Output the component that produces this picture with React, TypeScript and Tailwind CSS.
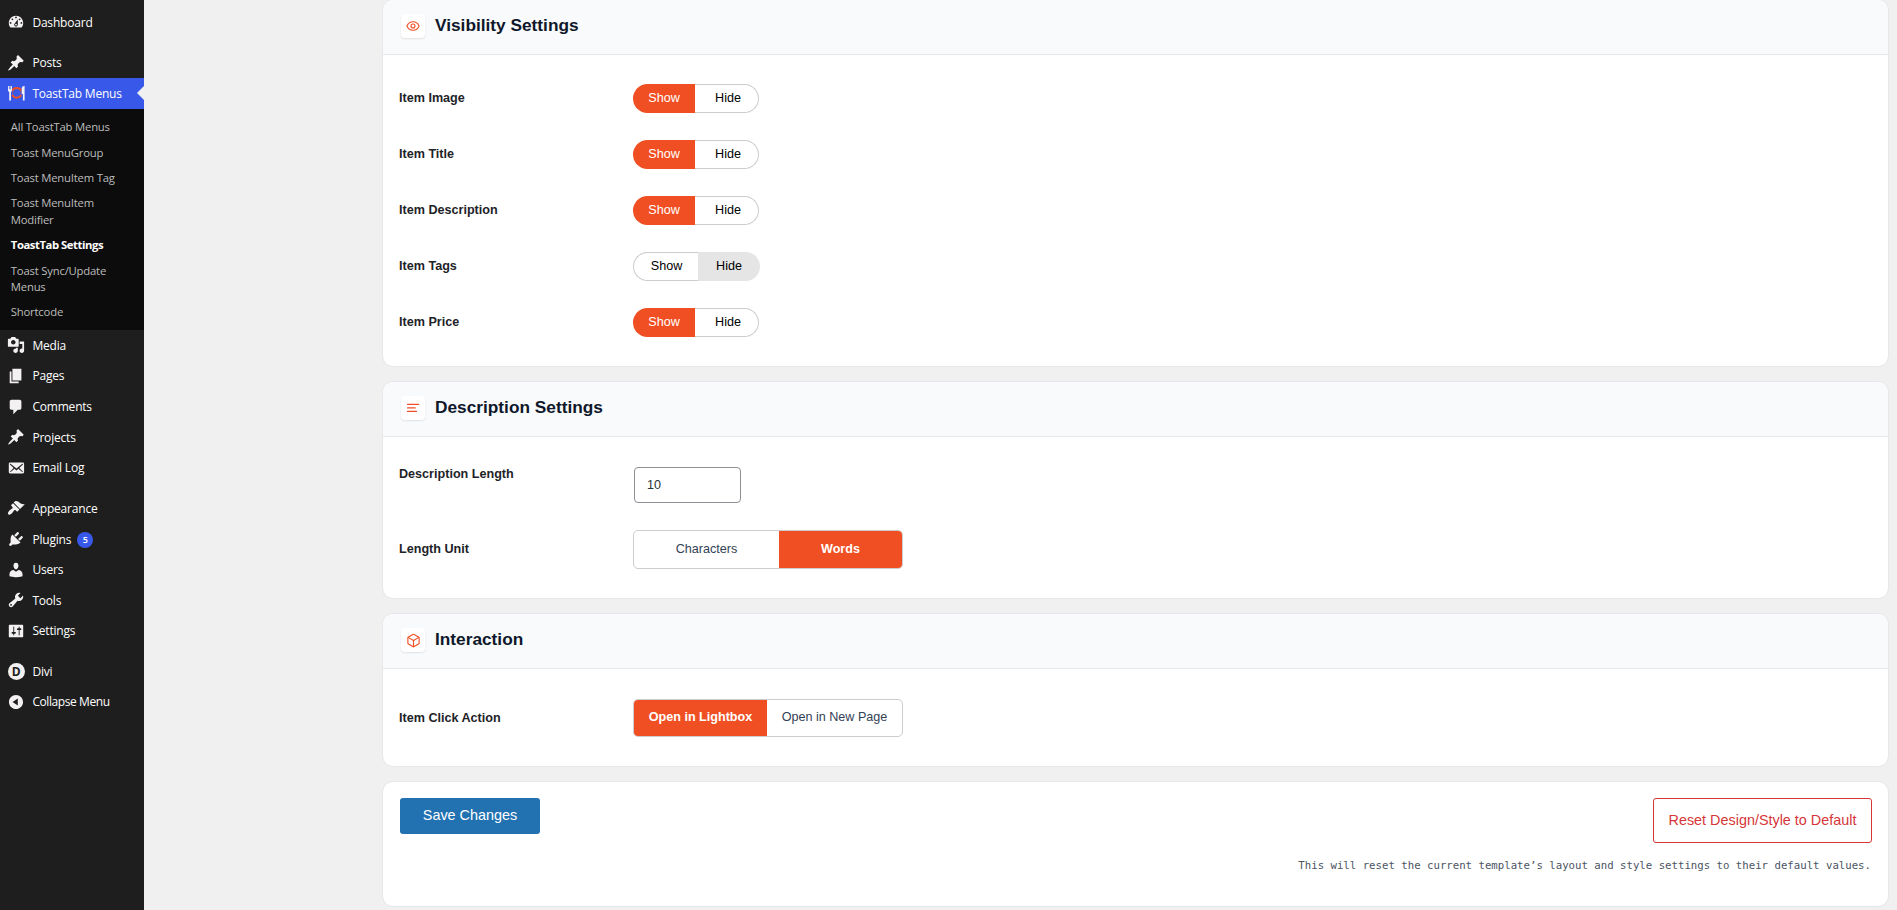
import type { ReactNode } from 'react';
import { Box } from 'lucide-react';

const icons = {
    dashboard: 'M3.76 16h12.48c1.1-1.37 1.76-3.11 1.76-5 0-4.42-3.58-8-8-8s-8 3.58-8 8c0 1.89.66 3.63 1.76 5zM10 4c.55 0 1 .45 1 1s-.45 1-1 1-1-.45-1-1 .45-1 1-1zM6 6c.55 0 1 .45 1 1s-.45 1-1 1-1-.45-1-1 .45-1 1-1zm8 0c.55 0 1 .45 1 1s-.45 1-1 1-1-.45-1-1 .45-1 1-1zm-5.37 5.55L12 7v6c0 1.1-.9 2-2 2s-2-.9-2-2c0-.57.24-1.08.63-1.45zM4 10c.55 0 1 .45 1 1s-.45 1-1 1-1-.45-1-1 .45-1 1-1zm12 0c.55 0 1 .45 1 1s-.45 1-1 1-1-.45-1-1 .45-1 1-1zm-5 3c0-.55-.45-1-1-1s-1 .45-1 1 .45 1 1 1 1-.45 1-1z',
    pin: 'M10.44 3.02l1.82-1.82 6.36 6.35-1.83 1.82c-1.05-.68-2.48-.57-3.41.36l-.75.75c-.92.93-1.04 2.35-.35 3.41l-1.83 1.82-2.41-2.41-2.8 2.79c-.42.42-3.38 2.71-3.8 2.29s1.86-3.39 2.28-3.81l2.79-2.79L4.1 9.36l1.83-1.82c1.05.69 2.48.57 3.4-.36l.75-.75c.93-.92 1.05-2.35.36-3.41z',
    media: 'M13 11V4c0-.55-.45-1-1-1h-1.67L9 1H5L3.67 3H2c-.55 0-1 .45-1 1v7c0 .55.45 1 1 1h10c.55 0 1-.45 1-1zM7 4.5c1.38 0 2.5 1.12 2.5 2.5S8.38 9.5 7 9.5 4.5 8.38 4.5 7 5.62 4.5 7 4.5zM14 6h5v10.5c0 1.38-1.12 2.5-2.5 2.5S14 17.88 14 16.5s1.12-2.5 2.5-2.5c.17 0 .34.02.5.05V9h-3V6zm-4 8.05V13h2v3.5c0 1.38-1.12 2.5-2.5 2.5S7 17.88 7 16.5 8.12 14 9.5 14c.17 0 .34.02.5.05z',
    page: 'M6 15V2h10v13H6zm-1 1h8v2H3V5h2v11z',
    comment: 'M5 2h9c1.1 0 2 .9 2 2v7c0 1.1-.9 2-2 2h-2l-5 5v-5H5c-1.1 0-2-.9-2-2V4c0-1.1.9-2 2-2z',
    email: 'M19 14.5v-9c0-.83-.67-1.5-1.5-1.5H3.49c-.83 0-1.5.67-1.5 1.5v9c0 .83.67 1.5 1.5 1.5H17.5c.83 0 1.5-.67 1.5-1.5zm-1.31-9.11c.33.33.15.67-.03.84L13.6 9.95l3.9 4.06c.12.14.2.36.06.51-.13.16-.43.15-.56.05l-4.37-3.73-2.14 1.95-2.13-1.95-4.37 3.73c-.13.1-.43.11-.56-.05-.14-.15-.06-.37.06-.51l3.9-4.06-4.06-3.72c-.18-.17-.36-.51-.03-.84s.67-.17.95.07l6.24 5.04 6.25-5.04c.28-.24.62-.4.95-.07z',
    appearance: 'M14.48 11.06L7.41 3.99l1.5-1.5c.5-.56 2.3-.47 3.51.32 1.21.8 1.43 1.28 2.91 2.1 1.18.64 2.45 1.26 4.45.85zm-.71.71L6.7 4.7 4.93 6.47c-.39.39-.39 1.02 0 1.41l1.06 1.06c.39.39.39 1.03 0 1.42-.6.6-1.43 1.11-2.21 1.69-.35.26-.7.53-1.01.84C1.43 14.23.4 16.08 1.4 17.07c.99 1 2.84-.03 4.18-1.36.31-.31.58-.66.85-1.02.57-.78 1.08-1.61 1.69-2.21.39-.39 1.02-.39 1.41 0l1.06 1.06c.39.39 1.02.39 1.41 0z',
    plugins: 'M13.11 4.36L9.87 7.6 8 5.73l3.24-3.24c.35-.34 1.05-.2 1.56.32.52.51.66 1.21.31 1.55zm-8 1.77l.91-1.12 9.01 9.01-1.19.84c-.71.71-2.63 1.16-3.82 1.16H6.14L4.9 17.26c-.59.59-1.54.59-2.12 0-.59-.58-.59-1.53 0-2.12l1.24-1.24v-3.88c0-1.13.4-3.19 1.09-3.89zm7.26 3.97l3.24-3.24c.34-.35 1.04-.21 1.55.31.52.51.66 1.21.31 1.55l-3.24 3.25z',
    users: 'M10 9.25c-2.27 0-2.73-3.44-2.73-3.44C7 4.02 7.82 2 9.97 2c2.16 0 2.98 2.02 2.71 3.81 0 0-.41 3.44-2.68 3.44zm0 2.57L12.72 10c2.39 0 4.52 2.33 4.52 4.53v2.49s-3.65 1.13-7.24 1.13c-3.65 0-7.24-1.13-7.24-1.13v-2.49c0-2.25 1.94-4.48 4.47-4.48z',
    tools: 'M16.68 9.77c-1.34 1.34-3.3 1.67-4.95.99l-5.41 6.52c-.99.99-2.59.99-3.58 0s-.99-2.59 0-3.57l6.52-5.42c-.68-1.65-.35-3.61.99-4.95 1.28-1.28 3.12-1.62 4.72-1.06l-2.89 2.89 2.82 2.82 2.86-2.87c.53 1.58.18 3.39-1.08 4.65zM3.81 16.21c.4.39 1.04.39 1.43 0 .4-.4.4-1.04 0-1.43-.39-.4-1.03-.4-1.43 0-.39.39-.39 1.03 0 1.43z',
    settings: 'M18 16V4c0-.55-.45-1-1-1H3c-.55 0-1 .45-1 1v12c0 .55.45 1 1 1h14c.55 0 1-.45 1-1zM8 11h1c.55 0 1 .45 1 1s-.45 1-1 1H8v1.5c0 .28-.22.5-.5.5s-.5-.22-.5-.5V13H6c-.55 0-1-.45-1-1s.45-1 1-1h1V5.5c0-.28.22-.5.5-.5s.5.22.5.5V11zm5-2h-1c-.55 0-1-.45-1-1s.45-1 1-1h1V5.5c0-.28.22-.5.5-.5s.5.22.5.5V7h1c.55 0 1 .45 1 1s-.45 1-1 1h-1v5.5c0 .28-.22.5-.5.5s-.5-.22-.5-.5V9z',
    collapse: 'M10 2.16c4.33 0 7.84 3.51 7.84 7.84s-3.51 7.84-7.84 7.84S2.16 14.33 2.16 10 5.71 2.16 10 2.16zm2 11.72V6.12L6.18 9.97z',
};

const submenu = [
    'All ToastTab Menus',
    'Toast MenuGroup',
    'Toast MenuItem Tag',
    'Toast MenuItem Modifier',
    'ToastTab Settings',
    'Toast Sync/Update Menus',
    'Shortcode',
];

const contentItems = [
    { icon: icons.media, label: 'Media' },
    { icon: icons.page, label: 'Pages' },
    { icon: icons.comment, label: 'Comments' },
    { icon: icons.pin, label: 'Projects' },
    { icon: icons.email, label: 'Email Log' },
];

const adminItems = [
    { icon: icons.appearance, label: 'Appearance' },
    { icon: icons.plugins, label: 'Plugins', count: 5 },
    { icon: icons.users, label: 'Users' },
    { icon: icons.tools, label: 'Tools' },
    { icon: icons.settings, label: 'Settings' },
];

const visibility = [
    { label: 'Item Image', shown: true },
    { label: 'Item Title', shown: true },
    { label: 'Item Description', shown: true },
    { label: 'Item Tags', shown: false },
    { label: 'Item Price', shown: true },
];

function DashIcon({ path }: { path: string }) {
    return (
        <svg viewBox="0 0 20 20" className="w-[18px] h-[18px] fill-[#f3f1f1]">
            <path fillRule="evenodd" d={path} />
        </svg>
    );
}

// Fork and knife around the orange plate
function ToastIcon() {
    return (
        <svg viewBox="0 0 18 18" className="w-[18px] h-[18px]" fill="none">
            <path d="M1.500 2v5M3 2v5M4.500 2v5" stroke="#f3f1f1" strokeWidth="0.9" />
            <path d="M1.050 5.200h3.900v1.900l-1 .9v8.600H2.200V8l-1.150-.9z" fill="#f3f1f1" />
            <path d="M15.900 16.600V9.900h-1.200V5c0-2 1-3.200 2.900-3v14.600z" fill="#f3f1f1" />
            <path d="M5.500 6.700c1.400-3.600 7.100-3.600 8.500 0M5.500 11c1.400 3.600 7.100 3.600 8.500 0" stroke="#f04f23" strokeWidth="1.9" />
            <path d="M5.600 7v3.800M13.900 7v3.800" stroke="#f04f23" strokeWidth="0.5" />
        </svg>
    );
}

interface MenuItemProps {
    icon: ReactNode;
    label: string;
    count?: number;
    active?: boolean;
    tight?: boolean;
}

function MenuItem({ icon, label, count, active, tight }: MenuItemProps) {
    return (
        <a className={`relative flex items-center h-[30.6px] text-[12px] text-white ${tight ? 'tracking-[-0.42px]' : 'tracking-[-0.2px]'} ${active ? 'bg-[#3858e9]' : ''}`}>
            <span className="w-[32.4px] flex justify-center shrink-0">{icon}</span>
            <span className="mt-px whitespace-nowrap">{label}</span>
            {count && (
                <span className="ml-[6px] mt-px size-4 rounded-full bg-[#3858e9] text-[9px] leading-4 font-semibold text-center tracking-normal">{count}</span>
            )}
            {active && (
                <span className="absolute right-0 top-1/2 -translate-y-1/2 border-y-[7px] border-y-transparent border-r-[7px] border-r-[#f0f0f0]" />
            )}
        </a>
    );
}

function Sidebar() {
    return (
        <aside className="w-36 shrink-0 bg-[#1e1e1e] pt-[6.9px] font-['Open_Sans',sans-serif]">
            <MenuItem icon={<DashIcon path={icons.dashboard} />} label="Dashboard" />
            <div className="h-[9.9px]" />
            <MenuItem icon={<DashIcon path={icons.pin} />} label="Posts" />
            <MenuItem icon={<ToastIcon />} label="ToastTab Menus" active />
            <ul className="bg-[#0c0c0c] pt-[6.3px] pb-[4.8px] text-[11.3px] leading-[16.38px] tracking-[-0.2px] text-[#bcbcbc]">
                {submenu.map((label) => (
                    <li
                        key={label}
                        className={`py-[4.5px] pl-[10.8px] pr-6 ${label === 'ToastTab Settings' ? 'font-bold text-white tracking-[-0.45px] whitespace-nowrap' : ''}`}
                    >
                        {label}
                    </li>
                ))}
            </ul>
            {contentItems.map((item) => (
                <MenuItem key={item.label} icon={<DashIcon path={item.icon} />} label={item.label} />
            ))}
            <div className="h-[10.2px]" />
            {adminItems.map((item) => (
                <MenuItem key={item.label} icon={<DashIcon path={item.icon} />} label={item.label} count={item.count} />
            ))}
            <div className="h-[9.9px]" />
            <MenuItem
                icon={
                    <span className="size-[17px] rounded-full bg-[#f3f1f1] text-[#1e1e1e] text-[12px] leading-[17px] font-bold text-center tracking-normal">
                        D
                    </span>
                }
                label="Divi"
            />
            <MenuItem icon={<DashIcon path={icons.collapse} />} label="Collapse Menu" tight />
        </aside>
    );
}

function Card({ icon, title, children }: { icon: ReactNode; title: string; children: ReactNode }) {
    return (
        <section className="bg-white border border-[#e5e7eb] rounded-[11px] overflow-hidden">
            <header className="h-[55px] flex items-center gap-[10px] pl-[18px] bg-[#f9fafc] border-b border-[#e5e7eb]">
                <span className="size-6 mt-[-2px] flex items-center justify-center bg-white rounded-[4px] shadow-[0_1px_2px_rgba(0,0,0,0.1)] text-[#f04f23]">
                    {icon}
                </span>
                <h2 className="mt-[-2px] text-[17.28px] font-bold text-[#0f172a]">{title}</h2>
            </header>
            {children}
        </section>
    );
}

function Row({ label, children }: { label: string; children: ReactNode }) {
    return (
        <div className="flex items-center pl-4">
            <span className="w-[234px] shrink-0 font-bold text-[#1d2327]">{label}</span>
            {children}
        </div>
    );
}

function Toggle({ shown }: { shown: boolean }) {
    if (shown) {
        return (
            <div className="flex h-[29px] leading-[29px] text-center text-black">
                <span className="w-[62px] bg-[#f04f23] text-white rounded-l-full">Show</span>
                <span className="w-16 pl-[3px] leading-[27px] border border-l-0 border-[#ccc] rounded-r-full">Hide</span>
            </div>
        );
    }
    return (
        <div className="flex h-[29px] leading-[29px] text-center text-black">
            <span className="w-[65px] pl-px leading-[27px] border border-r-0 border-[#ccc] rounded-l-full">Show</span>
            <span className="w-[62px] bg-[#e5e5e5] rounded-r-full">Hide</span>
        </div>
    );
}

export default function App() {
    return (
        <div className="flex h-[910px] overflow-hidden bg-[#f0f0f0] font-['Liberation_Sans',Arial,sans-serif] text-[12.6px]">
            <Sidebar />
            <main className="flex-1 flex flex-col gap-[14px] pl-[238px] pr-2 mt-[-1px]">
                <Card
                    title="Visibility Settings"
                    icon={
                        <svg viewBox="0 0 14 14" className="w-[14px] h-[14px]" fill="none" stroke="currentColor" strokeWidth="1.1">
                            <path d="M.9 7C2.200 4 4.300 2.700 7 2.700S11.800 4 13.100 7C11.800 10 9.700 11.300 7 11.300S2.200 10 .9 7z" />
                            <circle cx="7" cy="7" r="2" />
                        </svg>
                    }
                >
                    <div className="flex flex-col gap-[27px] pt-[29px] pb-[29px]">
                        {visibility.map((item) => (
                            <Row key={item.label} label={item.label}>
                                <Toggle shown={item.shown} />
                            </Row>
                        ))}
                    </div>
                </Card>

                <Card
                    title="Description Settings"
                    icon={
                        <svg viewBox="0 0 14 14" className="w-[14px] h-[14px]" fill="none" stroke="currentColor" strokeWidth="1.25" strokeLinecap="round">
                            <path d="M1.600 3.400h11M1.600 6.900h7.600M1.600 10.400h8.800" />
                        </svg>
                    }
                >
                    <div className="flex flex-col gap-[27px] pt-[30px] pb-[29px]">
                        <div className="flex items-start pl-4">
                            <span className="w-[235px] shrink-0 leading-[15px] font-bold text-[#1d2327]">Description Length</span>
                            <input
                                className="w-[107px] h-9 px-3 pb-px border border-[#8c8f94] rounded-[4px] text-[#2c3338] bg-white"
                                defaultValue="10"
                            />
                        </div>
                        <Row label="Length Unit">
                            <div className="flex w-[270px] h-[39px] leading-[36px] text-center border border-[#ccc] rounded-[5px] overflow-hidden">
                                <span className="w-[145px] text-[#334155]">Characters</span>
                                <span className="flex-1 bg-[#f04f23] text-white font-bold">Words</span>
                            </div>
                        </Row>
                    </div>
                </Card>

                <Card title="Interaction" icon={<Box size={15} strokeWidth={1.8} />}>
                    <div className="pt-[30px] pb-[29px]">
                        <Row label="Item Click Action">
                            <div className="flex w-[270px] h-[38px] leading-[35px] text-center border border-[#ccc] rounded-[5px] overflow-hidden">
                                <span className="w-[133px] bg-[#f04f23] text-white font-bold">Open in Lightbox</span>
                                <span className="flex-1 text-[#334155]">Open in New Page</span>
                            </div>
                        </Row>
                    </div>
                </Card>

                <section className="flex justify-between items-start h-[126px] shrink-0 pt-4 pl-[17px] pr-4 bg-white border border-[#e5e7eb] rounded-[11px]">
                    <button className="w-[140px] h-9 bg-[#2271b1] rounded-[3px] text-white text-[14.4px]">Save Changes</button>
                    <div className="flex flex-col items-end">
                        <button className="w-[219px] h-[45px] border border-[#d63638] rounded-[3px] text-[#d63638] text-[14.4px]">
                            Reset Design/Style to Default
                        </button>
                        <p className="mt-[15px] pr-px font-['DejaVu_Sans_Mono',monospace] text-[10.7px] leading-4 text-[#4b5563]">
                            This will reset the current template’s layout and style settings to their default values.
                        </p>
                    </div>
                </section>
            </main>
        </div>
    );
}
